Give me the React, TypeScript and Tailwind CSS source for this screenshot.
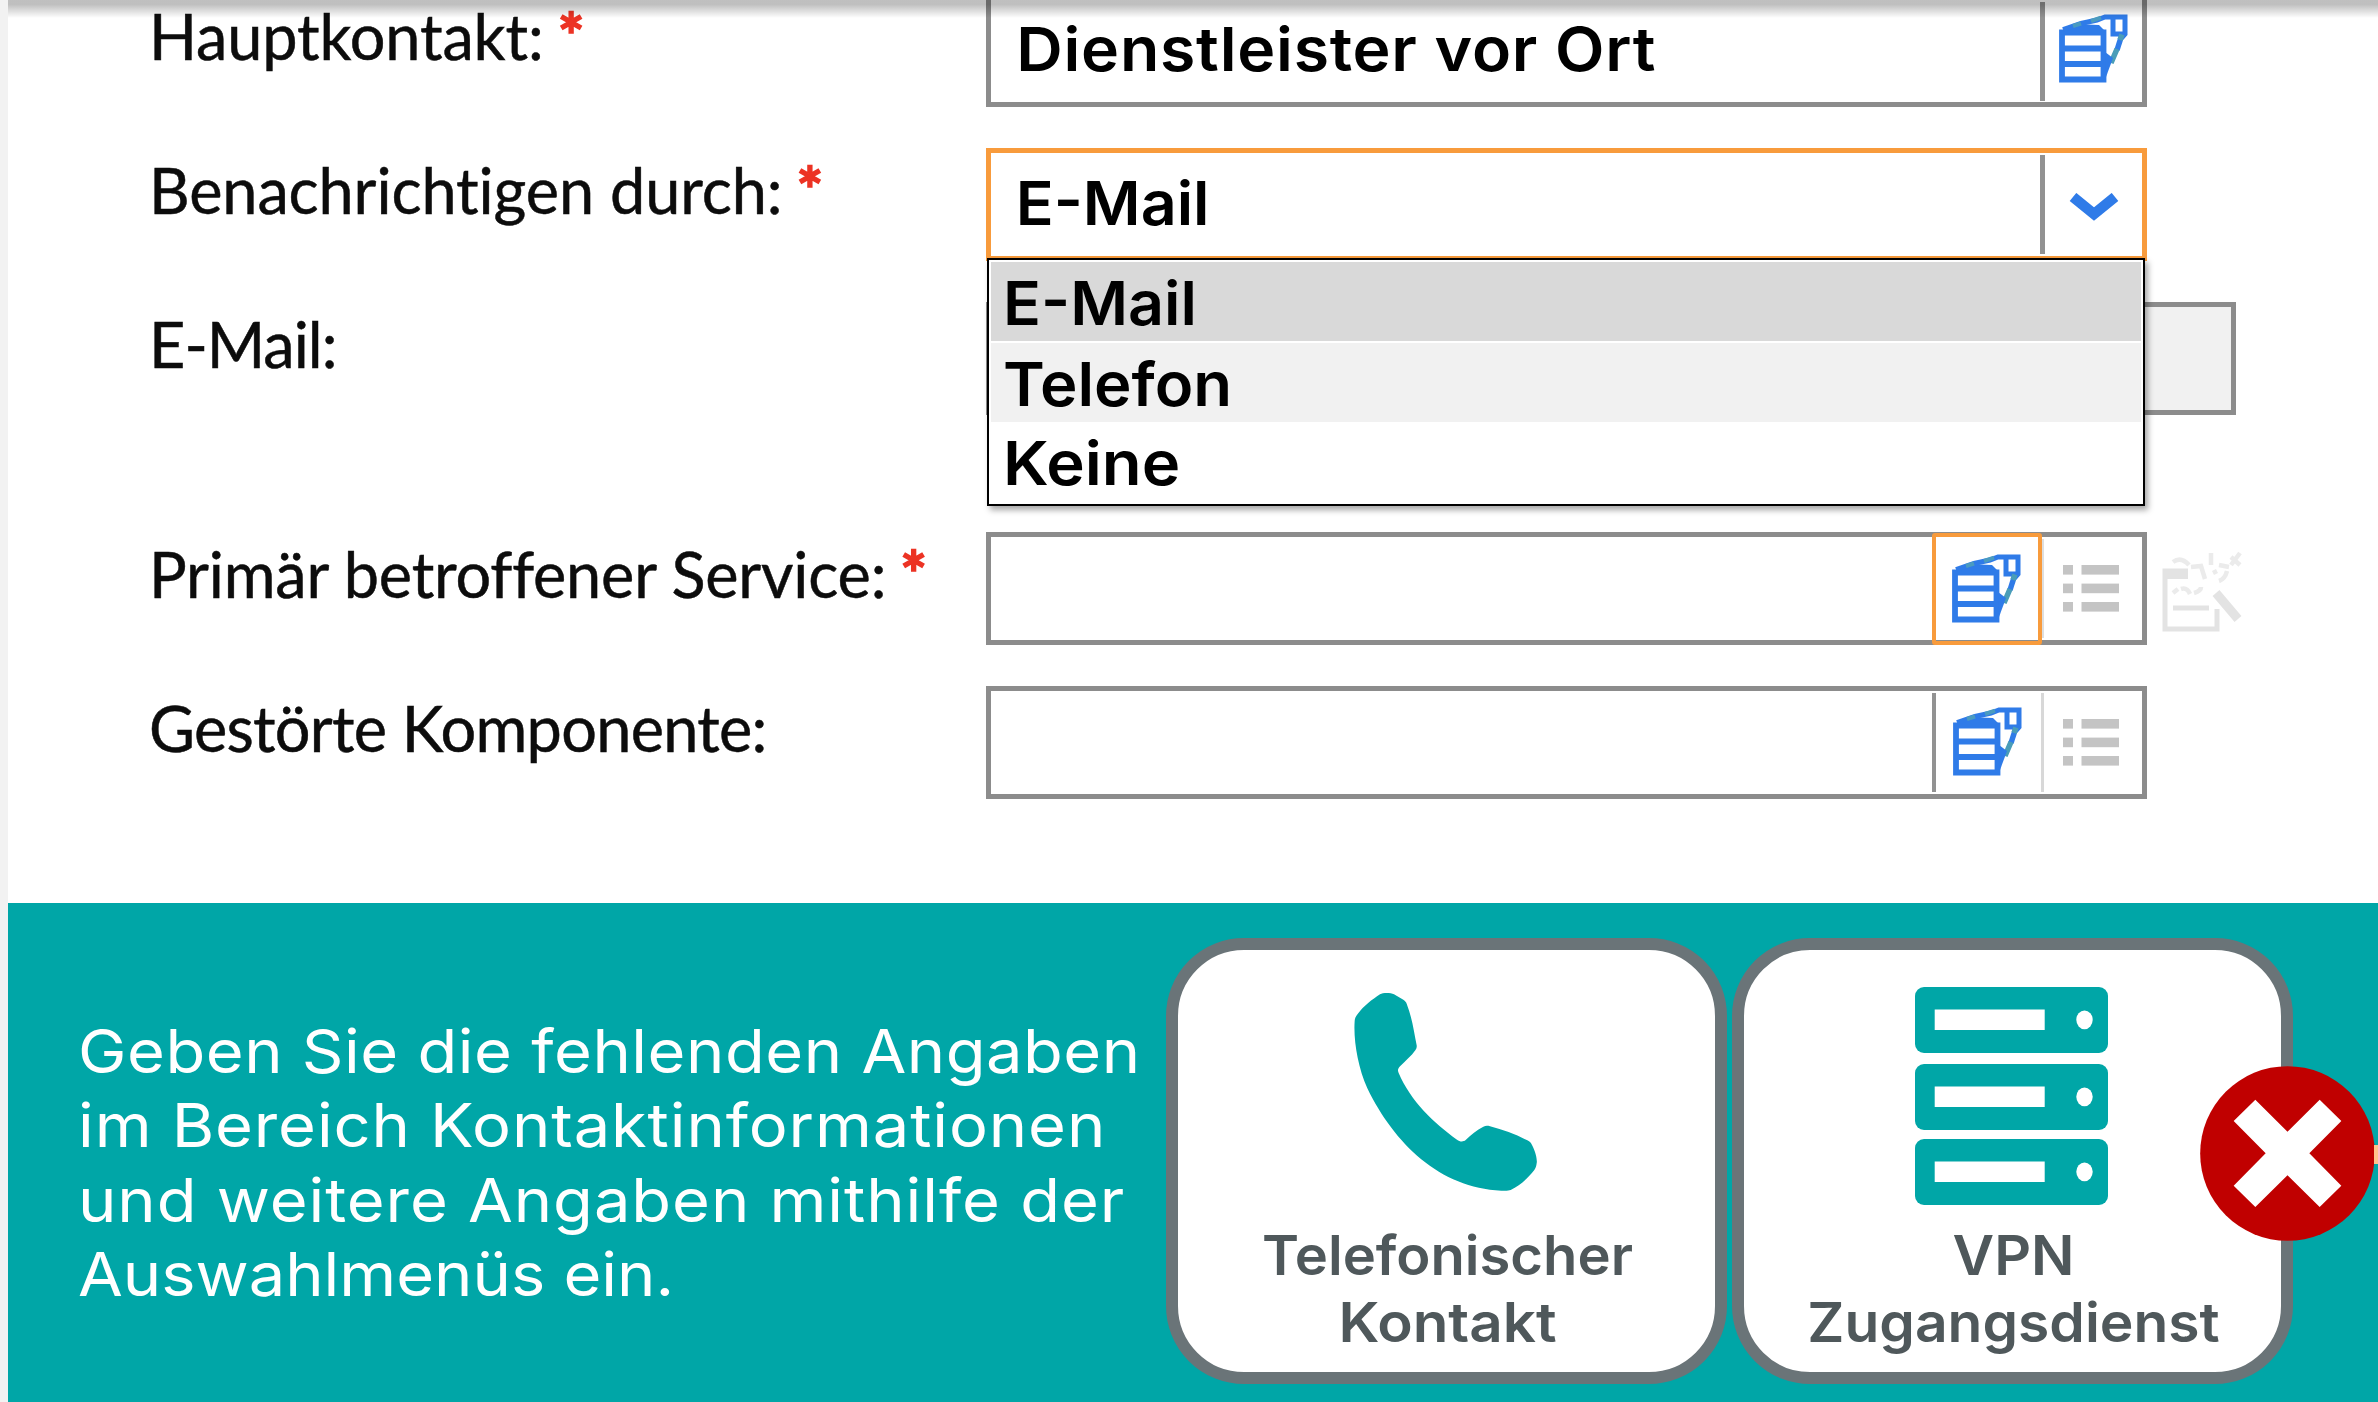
import type { ReactNode } from "react";

const labelFont =
  "font-['Lato',sans-serif] text-[63px] leading-[76px] whitespace-nowrap text-[#0c0c0c] [-webkit-text-stroke:0.5px]";
const valueFont =
  "font-['Inter',sans-serif] text-[61px] leading-[74px] font-semibold whitespace-nowrap text-black";

function CatalogIcon() {
  return (
    <svg width="70" height="70" viewBox="0 0 70 70" fill="none" stroke="#2f7be8" strokeWidth="5.8" className="block">
      <path d="M3 18.5H44.5V65.5H3ZM3 34.5H44.5M3 50H44.5" />
      <path d="M3 17L16 10L40 11L46 17" fill="#2f7be8" stroke="none" />
      <path d="M4 15.5L22 9.5L38 6L46 3H66V20L62.5 24" strokeWidth="5" />
      <path d="M14 12L22 9.5M32 7L42 3.6" stroke="#4a9bc0" strokeWidth="4" />
      <path d="M54 3V20H65.5" strokeWidth="5" />
      <path d="M62.5 22L58 36" strokeWidth="5.5" />
      <path d="M63 20.5L61 26M58 35L52 49" stroke="#4a9db8" strokeWidth="5.5" />
      <path d="M54 44L47 63L46 38Z" fill="#2f7be8" stroke="none" />
    </svg>
  );
}

function ListIcon() {
  return (
    <svg width="56" height="48" viewBox="0 0 56 48" fill="#c4c4c4" className="block">
      {[0, 18.6, 37].map((y) => (
        <g key={y}>
          <rect x="0" y={y} width="10" height="9.6" />
          <rect x="18.5" y={y} width="37.5" height="9.6" />
        </g>
      ))}
    </svg>
  );
}

function EditGhostIcon() {
  return (
    <svg width="82" height="84" viewBox="0 0 82 84" fill="none" stroke="#e3e3e3" strokeWidth="5" className="block">
      <path d="M27 22H4V80H56V60" />
      <path d="M4 26H27" strokeWidth="8" />
      <path d="M12 59H48" strokeWidth="5" />
      <path d="M55 44L77 70" strokeWidth="9" />
      <path
        d="M12 13Q20 7 28 16M30 18L40 17L44 30M12 44L17 40M20 40Q26 38 29 45M33 44Q40 42 40 38M50 4V16M52 24L56 22M58 32Q64 30 66 22M58 16L68 18M70 8L79 16M70 16L79 4"
        stroke="#ebebeb"
        strokeWidth="4.5"
      />
    </svg>
  );
}

function Row({
  label,
  required,
  spacing,
  height = "h-[154px]",
  pad = "pt-1",
  children,
}: {
  label: string;
  required?: boolean;
  spacing: string;
  height?: string;
  pad?: string;
  children: ReactNode;
}) {
  return (
    <div className={`flex shrink-0 ${height}`}>
      <div className={`w-[978px] shrink-0 pl-[141px] ${pad} ${labelFont}`}>
        <span className={spacing}>{label}</span>
        {required && (
          <span className="ml-[14px] font-bold text-[#ec3324] [-webkit-text-stroke:1.6px]">*</span>
        )}
      </div>
      {children}
    </div>
  );
}

function Field({ className, children }: { className: string; children?: ReactNode }) {
  return (
    <div className={`relative flex w-[1161px] shrink-0 items-center bg-white ${className}`}>
      {children}
    </div>
  );
}

const gray = "border-[5px] border-[#8c8c8c]";
const orange = "border-[5px] border-[#f89b3c]";

function Divider({ tone }: { tone: string }) {
  return <div className={`h-[99px] shrink-0 ${tone}`} />;
}

function Card({ icon, lines, children }: { icon: ReactNode; lines: [string, string][]; children?: ReactNode }) {
  return (
    <div className="relative h-[446px] w-[561px] shrink-0 rounded-[78px] border-[12px] border-[#6a7478] bg-white">
      <div className="flex h-[272px] justify-center">{icon}</div>
      <div className="pl-[2px] text-center font-['Inter',sans-serif] text-[54.5px] leading-[67px] font-semibold text-[#4f585b]">
        {lines.map(([text, stretch]) => (
          <p key={text} className={`whitespace-nowrap ${stretch}`}>
            {text}
          </p>
        ))}
      </div>
      {children}
    </div>
  );
}

export default function App() {
  return (
    <div className="relative flex h-[1402px] w-[2378px] overflow-hidden bg-white">
      <div className="w-2 shrink-0 bg-[#f2f2f2]" />
      <main className="flex min-w-0 flex-1 flex-col">
        <section className="relative flex h-[903px] shrink-0 flex-col">
          <Row label="Hauptkontakt:" required spacing="tracking-[-0.1px]" height="h-[148px]" pad="pt-0 -mt-[2px]">
            <Field className={`h-[107px] border-t-0 ${gray} border-t-0`}>
              <span className={`flex-1 origin-left scale-x-[1.055] pb-1 pl-6 tracking-[0.7px] ${valueFont}`}>
                Dienstleister vor Ort
              </span>
              <Divider tone="w-[5px] bg-[#929292]" />
              <div className="flex w-[97px] justify-center pb-[5px]">
                <CatalogIcon />
              </div>
            </Field>
          </Row>

          <Row label="Benachrichtigen durch:" required spacing="tracking-[-0.1px]">
            <Field className={`h-[113px] ${orange}`}>
              <span className={`flex-1 origin-left scale-x-[1.028] pb-[3px] pl-6 ${valueFont}`}>E-Mail</span>
              <Divider tone="w-[5px] bg-[#929292]" />
              <div className="flex w-[97px] justify-center pt-1">
                <svg width="50" height="28" viewBox="0 0 50 28" fill="none" stroke="#2f7be8" strokeWidth="10.5">
                  <path d="M4 4L25 21L46 4" />
                </svg>
              </div>
              <div className="absolute top-[105px] -left-[4px] z-10 flex h-[248px] w-[1158px] flex-col gap-[2px] border-2 border-black bg-white p-[2px] shadow-[3px_4px_6px_rgba(0,0,0,0.35)]">
                <div className={`h-[79px] bg-[#d9d9d9] pt-1 pl-3 ${valueFont}`}>
                  <span className="inline-block origin-left scale-x-[1.028]">E-Mail</span>
                </div>
                <div className={`h-[79px] bg-[#f1f1f1] pt-1 pl-3 ${valueFont}`}>
                  <span className="inline-block origin-left scale-x-[1.04]">Telefon</span>
                </div>
                <div className={`h-[78px] pt-[2px] pl-3 ${valueFont}`}>
                  <span className="inline-block origin-left scale-x-[1.068]">Keine</span>
                </div>
              </div>
            </Field>
          </Row>

          <Row label="E-Mail:" spacing="tracking-[-1px]" height="h-[230px]">
            <div className={`h-[113px] w-[1250px] bg-[#f1f1f1] ${gray}`} />
          </Row>

          <Row label="Primär betroffener Service:" required spacing="tracking-[-0.2px]">
            <Field className={`h-[113px] ${gray}`}>
              <div className="flex-1" />
              <div className="-my-1 flex h-[112px] w-[110px] items-center justify-center rounded-[3px] border-[4px] border-[#f89b3c]">
                <CatalogIcon />
              </div>
              <Divider tone="w-[2px] bg-[#dedede]" />
              <div className="flex w-[98px] justify-center pr-1">
                <ListIcon />
              </div>
            </Field>
            <div className="pt-[17px] pl-[14px]">
              <EditGhostIcon />
            </div>
          </Row>

          <Row label="Gestörte Komponente:" spacing="tracking-[-0.7px]">
            <Field className={`h-[113px] ${gray}`}>
              <div className="flex-1" />
              <Divider tone="w-[4px] bg-[#929292]" />
              <div className="flex w-[105px] justify-center pr-[2px] pb-[2px]">
                <CatalogIcon />
              </div>
              <Divider tone="w-[3px] bg-[#d8d8d8]" />
              <div className="flex w-[98px] justify-center pr-1">
                <ListIcon />
              </div>
            </Field>
          </Row>
          <div className="absolute inset-x-0 top-0 h-[18px] bg-gradient-to-b from-black/25 from-25% to-transparent" />
        </section>

        <section className="flex h-[499px] shrink-0 bg-[#00a6a7]">
          <div className="w-[1158px] shrink-0 pt-[111px] pl-[70px] font-['Inter',sans-serif] text-[61px] leading-[74.4px] whitespace-nowrap text-white">
            <div className="origin-left scale-x-[1.065]">
              <p className="tracking-[0.5px]">Geben Sie die fehlenden Angaben</p>
              <p className="tracking-[0.85px]">im Bereich Kontaktinformationen</p>
              <p className="tracking-[0.9px]">und weitere Angaben mithilfe der</p>
              <p>Auswahlmenüs ein.</p>
            </div>
          </div>
          <div className="flex shrink-0 gap-[5px] pt-[35px]">
            <Card
              lines={[
                ["Telefonischer", "scale-x-[1.03]"],
                ["Kontakt", "scale-x-[1.07]"],
              ]}
              icon={
                <svg width="240" height="240" viewBox="0 0 720 720" fill="#00a6a7" className="mt-5 ml-[6px] block">
                  <path d="M150 73C160 67 182 68 192 73L220 89C226 93 228 96 230 101C247 145 252 187 260 226C261 232 259 237 256 241C244 258 226 273 211 288C204 295 202 300 206 309C242 393 310 458 381 509C390 516 400 516 407 510C423 495 440 479 460 470C467 467 473 467 480 469C520 479 557 493 592 511C600 515 603 519 606 525C619 550 622 573 620 580C619 589 617 594 613 600C593 625 570 647 542 660C535 663 522 662 514 662C330 655 192 520 112 355C83 290 70 210 74 153C75 143 78 138 83 132C102 107 126 89 150 73Z" />
                </svg>
              }
            />
            <Card
              lines={[
                ["VPN", "scale-x-[1.05]"],
                ["Zugangsdienst", "scale-x-[1.045]"],
              ]}
              icon={
                <svg width="193" height="219" viewBox="0 0 193 219" className="mt-[37px] mr-[2px] block">
                  {[0, 77, 152].map((y) => (
                    <g key={y}>
                      <rect y={y} width="193" height="66" rx="9" fill="#00a6a7" />
                      <rect x="19.7" y={y + 22.5} width="110" height="20.5" fill="#fff" />
                      <ellipse cx="169.5" cy={y + 32.8} rx="8.2" ry="9.4" fill="#fff" />
                    </g>
                  ))}
                </svg>
              }
            >
              <svg width="175" height="175" viewBox="0 0 525 525" className="absolute top-[116px] left-[456px]">
                <circle cx="262.5" cy="262.5" r="262" fill="#c00000" />
                <path
                  d="M166 101L262.5 197L359 101L424 165L328 262L424 359L359 423L262.5 328L166 423L101 359L197 262L101 165Z"
                  fill="#fff"
                />
              </svg>
            </Card>
          </div>
        </section>
      </main>
      <div className="absolute top-[1145px] right-0 h-[19px] w-1 bg-[#ffc28b]" />
    </div>
  );
}
